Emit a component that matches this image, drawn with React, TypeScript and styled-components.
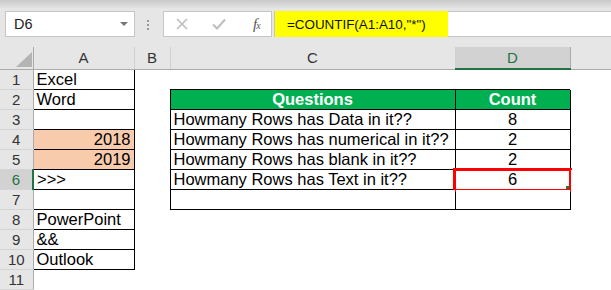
import React from 'react';
import styled, { createGlobalStyle, css } from 'styled-components';

const GlobalStyle = createGlobalStyle`
    html, body {
        margin: 0;
        padding: 0;
        background: #ffffff;
    }
    body {
        width: 611px;
        height: 290px;
        overflow: hidden;
        font-family: "Liberation Sans", Arial, sans-serif;
    }
`

const FormulaBar = styled.div`
    height: 47px;
    box-sizing: border-box;
    padding: 11px 0 0 5px;
    display: flex;
    align-items: flex-start;
    background: linear-gradient(#c9c9c9 0px, #e2e2e2 8px, #e6e6e6 8px);
`

const NameBox = styled.div`
    width: 130px;
    height: 26px;
    box-sizing: border-box;
    padding: 0 6px 0 8px;
    display: flex;
    align-items: center;
    justify-content: space-between;
    background: #ffffff;
    border: 1px solid #c6c6c6;
    font-size: 14.5px;
    color: #222;
`

const DropArrow = styled.span`
    width: 0;
    height: 0;
    border-left: 4px solid transparent;
    border-right: 4px solid transparent;
    border-top: 4px solid #777;
`

const Grip = styled.div`
    width: 3px;
    margin: 9px 13px 0 12px;
    display: flex;
    flex-direction: column;
    gap: 2px;

    span {
        width: 2px;
        height: 2px;
        background: #9a9a9a;
    }
`

const FuncBox = styled.div`
    width: 109px;
    height: 26px;
    box-sizing: border-box;
    display: flex;
    align-items: center;
    background: #ffffff;
    border: 1px solid #c6c6c6;
`

const FuncIcon = styled.span<{ $left: number }>`
    margin-left: ${({ $left }) => $left}px;
    display: flex;
    align-items: center;
`

const FxLabel = styled.span`
    margin-left: 27px;
    font-family: "Liberation Serif", "Times New Roman", serif;
    font-style: italic;
    font-size: 15px;
    color: #555;
    letter-spacing: -1px;

    sub {
        font-size: 10px;
        vertical-align: baseline;
    }
`

const FormulaInput = styled.div`
    flex: 1;
    height: 26px;
    margin-left: 2px;
    box-sizing: border-box;
    display: flex;
    background: #ffffff;
    border: 1px solid #c6c6c6;
    border-right: none;
`

const Highlight = styled.div`
    width: 173px;
    margin: -1px 0 -1px 0;
    padding-left: 12px;
    box-sizing: border-box;
    display: flex;
    align-items: center;
    background: #ffff00;
    font-size: 13.4px;
    color: #111;
`

const Sheet = styled.table`
    border-collapse: collapse;
    table-layout: fixed;
    width: 611px;
    font-size: 16.5px;
    color: #000;
`

const HeadCell = styled.th<{ $active?: boolean }>(({ $active }) => css`
    height: 21px;
    padding: 0;
    font-weight: normal;
    font-size: 15px;
    color: ${$active ? '#217346' : '#333'};
    background: ${$active ? '#d2d2d2' : '#e6e6e6'};
    border-right: 1px solid ${$active ? '#ababab' : '#d0d0d0'};
    border-bottom: ${$active ? '2px solid #217346' : '1px solid #ababab'};
    text-align: center;
    vertical-align: middle;
`)

const Corner = styled.th`
    height: 21px;
    padding: 0;
    background: #e6e6e6;
    border-right: 1px solid #ababab;
    border-bottom: 1px solid #ababab;
    text-align: right;
    vertical-align: bottom;

    svg {
        display: block;
        margin: 0 1px 2px auto;
    }
`

const RowNum = styled.th<{ $active?: boolean }>(({ $active }) => css`
    height: 19px;
    padding: 0;
    font-weight: normal;
    font-size: 15px;
    line-height: 19px;
    color: ${$active ? '#217346' : '#333'};
    background: ${$active ? '#d2d2d2' : '#e6e6e6'};
    border-bottom: 1px solid #d4d4d4;
    border-right: ${$active ? '2px solid #217346' : '1px solid #ababab'};
    text-align: center;
`)

const Cell = styled.td<{ $boxed?: boolean; $fill?: string; $align?: 'left' | 'center' | 'right'; $head?: boolean }>(
    ({ $boxed, $fill, $align, $head }) => css`
    position: relative;
    height: 19px;
    padding: 0 3px;
    line-height: 19px;
    white-space: nowrap;
    overflow: visible;
    text-align: ${$align ?? 'left'};
    background: ${$fill ?? '#ffffff'};
    border: ${$boxed ? '1px solid #000' : 'none'};
    ${$head && css`
        color: #ffffff;
        font-weight: bold;
        background: #00b050;
    `}
`)

const Selection = styled.div`
    position: absolute;
    top: -2px;
    left: -3px;
    right: -2px;
    bottom: -3px;
    border: 3px solid #ff0000;
    pointer-events: none;

    &::after {
        content: '';
        position: absolute;
        right: 0;
        bottom: 0;
        width: 3px;
        height: 3px;
        background: #217346;
    }
`

interface SheetRow {
    a?: string;
    aNumber?: boolean;
    aFill?: string;
    question?: string;
    count?: string;
    inTable?: boolean;
    tableHead?: boolean;
    selected?: boolean;
}

const peach = '#f8cbad';

const rows: SheetRow[] = [
    { a: 'Excel' },
    { a: 'Word', question: 'Questions', count: 'Count', inTable: true, tableHead: true },
    { a: '', question: 'Howmany Rows has Data in it??', count: '8', inTable: true },
    { a: '2018', aNumber: true, aFill: peach, question: 'Howmany Rows has numerical in it??', count: '2', inTable: true },
    { a: '2019', aNumber: true, aFill: peach, question: 'Howmany Rows has blank in it??', count: '2', inTable: true },
    { a: '>>>', question: 'Howmany Rows has Text in it??', count: '6', inTable: true, selected: true },
    { a: '', question: '', count: '', inTable: true },
    { a: 'PowerPoint' },
    { a: '&&' },
    { a: 'Outlook' },
    {},
];

const columns = [
    { name: 'A', width: 101 },
    { name: 'B', width: 36 },
    { name: 'C', width: 285 },
    { name: 'D', width: 115, active: true },
    { name: '', width: 41 },
];

const CrossIcon = () => (
    <svg width="12" height="12" viewBox="0 0 12 12">
        <path d="M1 1 L11 11 M11 1 L1 11" stroke="#bdbdbd" strokeWidth="1.6" fill="none" />
    </svg>
)

const CheckIcon = () => (
    <svg width="14" height="12" viewBox="0 0 14 12">
        <path d="M1 6.5 L5 10.5 L13 1.5" stroke="#bdbdbd" strokeWidth="2" fill="none" />
    </svg>
)

const App = () => {
    return (
        <>
            <GlobalStyle />
            <FormulaBar>
                <NameBox>
                    D6
                    <DropArrow />
                </NameBox>
                <Grip>
                    <span />
                    <span />
                    <span />
                </Grip>
                <FuncBox>
                    <FuncIcon $left={12}><CrossIcon /></FuncIcon>
                    <FuncIcon $left={24}><CheckIcon /></FuncIcon>
                    <FxLabel>f<sub>x</sub></FxLabel>
                </FuncBox>
                <FormulaInput>
                    <Highlight>=COUNTIF(A1:A10,"*")</Highlight>
                </FormulaInput>
            </FormulaBar>
            <Sheet>
                <colgroup>
                    <col style={{ width: 33 }} />
                    {columns.map((c, i) => (
                        <col key={i} style={{ width: c.width }} />
                    ))}
                </colgroup>
                <thead>
                    <tr>
                        <Corner>
                            <svg width="16" height="15" viewBox="0 0 16 15">
                                <polygon points="16,0 16,15 0,15" fill="#b4b4b4" />
                            </svg>
                        </Corner>
                        {columns.map((c, i) => (
                            <HeadCell key={i} $active={c.active}>{c.name}</HeadCell>
                        ))}
                    </tr>
                </thead>
                <tbody>
                    {rows.map((r, i) => {
                        const rowNo = i + 1;
                        const boxedA = r.a !== undefined;
                        return (
                            <tr key={rowNo}>
                                <RowNum $active={r.selected}>{rowNo}</RowNum>
                                <Cell $boxed={boxedA} $fill={r.aFill} $align={r.aNumber ? 'right' : 'left'}>
                                    {r.a}
                                </Cell>
                                <Cell />
                                <Cell $boxed={r.inTable} $head={r.tableHead} $align={r.tableHead ? 'center' : 'left'}>
                                    {r.question}
                                </Cell>
                                <Cell $boxed={r.inTable} $head={r.tableHead} $align="center">
                                    {r.count}
                                    {r.selected && <Selection />}
                                </Cell>
                                <Cell />
                            </tr>
                        )
                    })}
                </tbody>
            </Sheet>
        </>
    )
}

export default App;
